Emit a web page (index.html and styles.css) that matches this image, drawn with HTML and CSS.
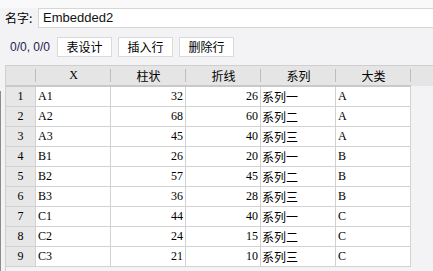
FILE: index.html
```html
<!DOCTYPE html>
<html lang="zh">
<head>
<meta charset="utf-8">
<title>Embedded2</title>
<link rel="stylesheet" href="styles.css">
</head>
<body>
<div class="namebar">
  <span class="label">名字:</span>
  <div class="input">Embedded2</div>
</div>
<div class="toolbar">
  <span class="pos">0/0, 0/0</span>
  <button class="btn">表设计</button>
  <button class="btn">插入行</button>
  <button class="btn">删除行</button>
</div>
<div class="grid">
  <div class="hd rh"></div>
  <div class="hd sep latin">X</div>
  <div class="hd sep">柱状</div>
  <div class="hd sep">折线</div>
  <div class="hd sep">系列</div>
  <div class="hd sep">大类</div>
  <div class="hd fill"></div>

  <div class="rn">1</div><div class="c l">A1</div><div class="c r">32</div><div class="c r">26</div><div class="c l cn">系列一</div><div class="c l">A</div><div class="f"></div>
  <div class="rn">2</div><div class="c l">A2</div><div class="c r">68</div><div class="c r">60</div><div class="c l cn">系列二</div><div class="c l">A</div><div class="f"></div>
  <div class="rn">3</div><div class="c l">A3</div><div class="c r">45</div><div class="c r">40</div><div class="c l cn">系列三</div><div class="c l">A</div><div class="f"></div>
  <div class="rn">4</div><div class="c l">B1</div><div class="c r">26</div><div class="c r">20</div><div class="c l cn">系列一</div><div class="c l">B</div><div class="f"></div>
  <div class="rn">5</div><div class="c l">B2</div><div class="c r">57</div><div class="c r">45</div><div class="c l cn">系列二</div><div class="c l">B</div><div class="f"></div>
  <div class="rn">6</div><div class="c l">B3</div><div class="c r">36</div><div class="c r">28</div><div class="c l cn">系列三</div><div class="c l">B</div><div class="f"></div>
  <div class="rn">7</div><div class="c l">C1</div><div class="c r">44</div><div class="c r">40</div><div class="c l cn">系列一</div><div class="c l">C</div><div class="f"></div>
  <div class="rn">8</div><div class="c l">C2</div><div class="c r">24</div><div class="c r">15</div><div class="c l cn">系列二</div><div class="c l">C</div><div class="f"></div>
  <div class="rn">9</div><div class="c l">C3</div><div class="c r">21</div><div class="c r">10</div><div class="c l cn">系列三</div><div class="c l">C</div><div class="f"></div>
</div>
</body>
</html>
```
FILE: styles.css
```css
html, body {
  margin: 0;
  padding: 0;
}
body {
  background: #f3f3f5;
  font-family: "Noto Sans CJK SC", "Liberation Sans", sans-serif;
  font-size: 12px;
  color: #000;
  height: 271px;
  overflow: hidden;
}
body::before {
  content: "";
  position: fixed;
  left: 0;
  top: 91px;
  bottom: 0;
  width: 1px;
  background: #8c8c8c;
}
.namebar {
  display: flex;
  align-items: center;
  padding: 8px 0 0 5px;
  background: linear-gradient(#f9f9fa 0 8px, #f3f3f5 8px);
}
.label {
  width: 33px;
  font-size: 12px;
  line-height: 20px;
  font-family: "Noto Sans CJK SC", sans-serif;
}
.input {
  flex: 1;
  height: 20px;
  box-sizing: border-box;
  border: 1px solid #d6d6d6;
  border-right: none;
  background: #fff;
  font-family: "Liberation Sans", "Noto Sans CJK SC", sans-serif;
  font-size: 13px;
  line-height: 18px;
  padding-left: 4px;
  color: #111;
}
.toolbar {
  display: flex;
  align-items: center;
  gap: 6px;
  padding: 9px 0 0 10px;
  height: 20px;
}
.pos {
  font-family: "Liberation Sans", sans-serif;
  font-size: 12px;
  color: #1c2450;
  width: 41px;
  white-space: nowrap;
  flex: none;
}
.btn {
  width: 55px;
  height: 20px;
  margin: 0;
  padding: 0;
  flex: none;
  border: 1px solid #dadada;
  background: #fff;
  font-family: "Noto Sans CJK SC", sans-serif;
  font-size: 12px;
  line-height: 18px;
  color: #000;
}
.grid {
  margin: 8px 0 0 5px;
  border-left: 1px solid #cfcfcf;
  border-top: 1px solid #cfcfcf;
  display: grid;
  grid-template-columns: 30px repeat(5, 75px) 1fr;
  grid-auto-rows: 20px;
  grid-template-rows: 21px;
  height: 206px;
}
.hd {
  background: #e5e5e5;
  box-sizing: border-box;
  border-bottom: 2px solid #c9c9c9;
  text-align: center;
  line-height: 19px;
  position: relative;
  font-family: "Noto Sans CJK SC", sans-serif;
}
.hd.latin {
  font-family: "Liberation Serif", serif;
}
.hd.fill {
  border-bottom: none;
  height: 20px;
}
.hd.rh::after,
.hd.sep::after {
  content: "";
  position: absolute;
  right: 0;
  top: 3px;
  height: 13px;
  width: 1px;
  background: #bdbdbd;
}
.rn {
  background: #e7e7e7;
  box-sizing: border-box;
  border-right: 1px solid #d2d2d2;
  border-bottom: 1px solid #d2d2d2;
  text-align: center;
  line-height: 19px;
  font-family: "Liberation Serif", serif;
}
.c {
  background: #fff;
  box-sizing: border-box;
  border-right: 1px solid #d2d2d2;
  border-bottom: 1px solid #d2d2d2;
  line-height: 19px;
  font-family: "Liberation Serif", serif;
  white-space: nowrap;
  overflow: hidden;
}
.c.l {
  padding-left: 2px;
}
.c.cn {
  padding-left: 1px;
  font-family: "Noto Sans CJK SC", sans-serif;
}
.c.r {
  text-align: right;
  padding-right: 2px;
}
.f {
  background: transparent;
}
```
